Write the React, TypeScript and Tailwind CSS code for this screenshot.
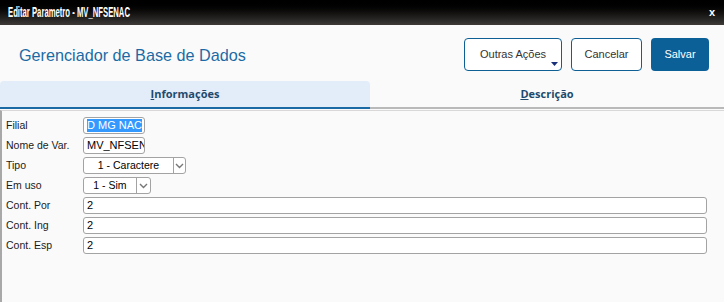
import React from "react";

const LABEL = "text-[10.5px] text-[#1a1a1a] leading-none";
const FONT = { fontFamily: '"Liberation Sans", Arial, sans-serif' };

function Field({ value, className = "", selected = false }: { value: string; className?: string; selected?: boolean }) {
  return (
    <div className={`h-[17px] border border-[#a3a3a3] rounded-[3px] bg-white flex items-center px-[3px] overflow-hidden ${className}`}>
      <span
        className={`text-[11px] leading-[13px] whitespace-nowrap ${selected ? "bg-[#3399ff] text-white" : "text-black"}`}
      >
        {value}
      </span>
    </div>
  );
}

function Select({ value, width, textWidth }: { value: string; width: string; textWidth: string }) {
  return (
    <div className={`h-[17px] border border-[#a3a3a3] rounded-[3px] bg-white flex items-stretch ${width}`}>
      <div className={`${textWidth} flex items-center justify-center border-r border-[#a3a3a3]`}>
        <span className="text-[10.5px] leading-none text-black">{value}</span>
      </div>
      <div className="flex-1 flex items-center justify-center">
        <svg width="9" height="6" viewBox="0 0 9 6">
          <path d="M1 1 L4.5 4.5 L8 1" fill="none" stroke="#777" strokeWidth="1.4" />
        </svg>
      </div>
    </div>
  );
}

export default function App() {
  const rows: { label: string; node: React.ReactNode }[] = [
    { label: "Filial", node: <Field value="D MG NAC" className="w-[62px]" selected /> },
    { label: "Nome de Var.", node: <Field value="MV_NFSENAC" className="w-[62px]" /> },
    { label: "Tipo", node: <Select value="1 - Caractere" width="w-[103px]" textWidth="w-[90px]" /> },
    { label: "Em uso", node: <Select value="1 - Sim" width="w-[68px]" textWidth="w-[53px]" /> },
    { label: "Cont. Por", node: <Field value="2" className="w-[624px]" /> },
    { label: "Cont. Ing", node: <Field value="2" className="w-[624px]" /> },
    { label: "Cont. Esp", node: <Field value="2" className="w-[624px]" /> },
  ];

  return (
    <div className="w-[724px] h-[302px] bg-[#fafafa] flex flex-col overflow-hidden" style={FONT}>
      {/* title bar */}
      <div className="h-[25px] flex items-center justify-between px-[8px] bg-gradient-to-b from-[#000000] to-[#3d3a38]">
        <span className="text-white text-[14px] font-bold whitespace-nowrap origin-left scale-x-[0.55]">
          Editar Parametro - MV_NFSENAC
        </span>
        <span className="text-white text-[11px] font-bold mr-[1px]">x</span>
      </div>

      {/* header */}
      <div className="h-[56px] flex items-start pt-[13px] pl-[19px] pr-[15px]">
        <h1 className="text-[16.2px] text-[#1a6ba5] mt-[5px] flex-1">Gerenciador de Base de Dados</h1>
        <div className="flex gap-[9px] text-[11px]">
          <button className="relative w-[98px] h-[33px] border border-[#0d5f94] rounded-[4px] text-[#333] bg-white">
            Outras Ações
            <svg className="absolute right-[3px] bottom-[4px]" width="7" height="4" viewBox="0 0 7 4">
              <path d="M0 0 H7 L3.5 4 Z" fill="#1a2f7a" />
            </svg>
          </button>
          <button className="w-[71px] h-[33px] border border-[#0d5f94] rounded-[4px] text-[#333] bg-white">Cancelar</button>
          <button className="w-[58px] h-[33px] rounded-[4px] text-white bg-[#0c6098]">Salvar</button>
        </div>
      </div>

      {/* tabs */}
      <div className="flex h-[28px]" style={{ fontFamily: '"Open Sans", sans-serif' }}>
        <div className="w-[370px] bg-[#e2edf9] rounded-t-[4px] border-b-2 border-[#1a6ba5] flex items-center justify-center">
          <span className="text-[11px] font-bold text-[#1f4a6e]">
            <span className="underline">I</span>nformações
          </span>
        </div>
        <div className="flex-1 border-b-2 border-[#b9b9b9] flex items-center justify-center">
          <span className="text-[11px] font-bold text-[#1f4a6e]">
            <span className="underline">D</span>escrição
          </span>
        </div>
      </div>

      {/* content */}
      <div className="flex-1 mt-[1px] border-t border-[#d8d8d8] border-l-2 border-l-[#a8a8a8] pt-[6px] flex flex-col gap-[3px]">
        {rows.map((r) => (
          <div key={r.label} className="flex items-center h-[17px]">
            <span className={`${LABEL} w-[81px] pl-[4px]`}>{r.label}</span>
            {r.node}
          </div>
        ))}
      </div>
    </div>
  );
}
